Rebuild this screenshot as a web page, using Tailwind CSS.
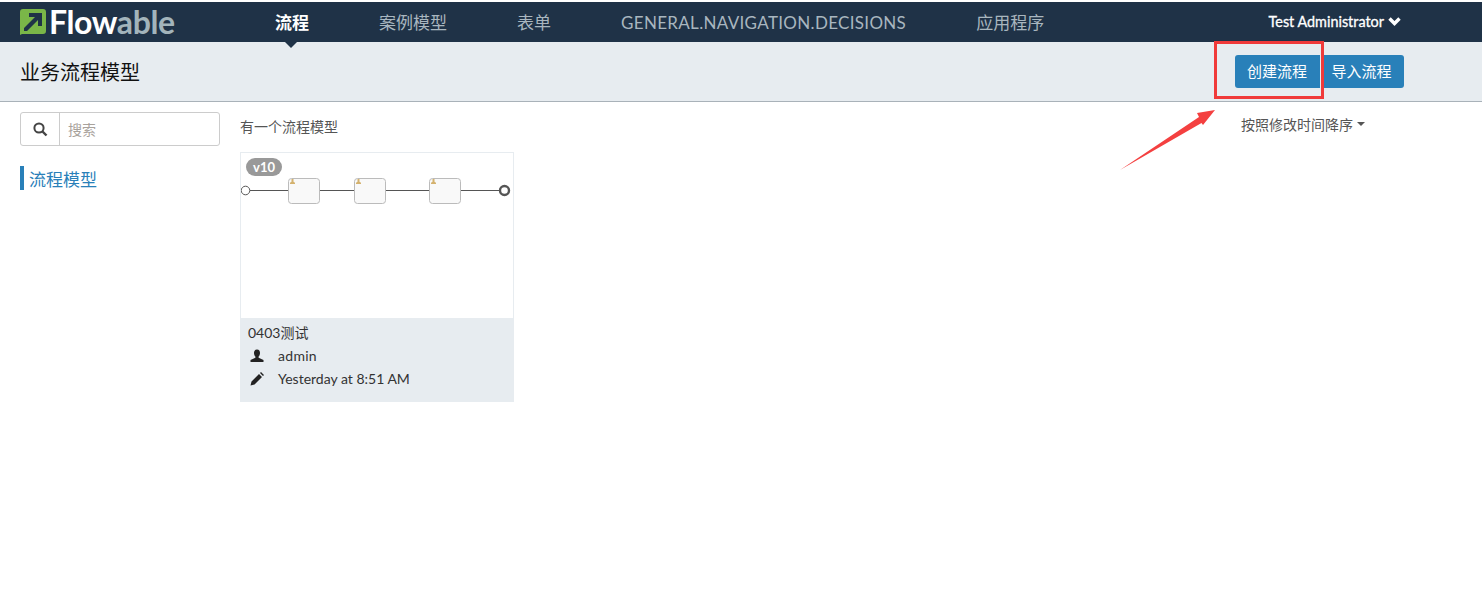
<!DOCTYPE html>
<html lang="en">
<head>
  <meta charset="UTF-8" />
  <title>Flowable</title>
  <script src="https://cdn.jsdelivr.net/npm/@tailwindcss/browser@4"></script>
</head>
<body class="bg-white text-[#1a1a1a] font-['Lato','Noto_Sans_CJK_SC',sans-serif] relative h-[594px] overflow-hidden">
  <!-- top nav -->
  <nav class="mt-[2px] h-[40px] bg-[#1f3247] flex items-center relative">
    <a class="ml-[20px] w-[155px] flex items-center shrink-0">
      <svg width="26" height="26" viewBox="0 0 26 26" class="shrink-0">
        <path d="M3 0H23Q26 0 26 3V22Q26 25 23 25H2L0 26V3Q0 0 3 0Z" fill="#7ab648"/>
        <path d="M9 4H22V17H18V11L7 22H4V19L15 8H9Z" fill="#1f3247"/>
      </svg>
      <span class="ml-[3px] text-[32px] leading-none font-bold tracking-[-0.4px] text-white">Flow<span class="text-[#a3b4bb]">able</span></span>
    </a>
    <ul class="flex items-center text-[17px] text-[#a9b6bf] ml-[100px] pt-[1px]">
      <li class="relative text-white font-bold w-[34px] text-center">流程
        <span class="absolute left-[10px] top-[32px] border-x-[6.500px] border-x-transparent border-t-[6px] border-t-[#1f3247]"></span>
      </li>
      <li class="ml-[70px]">案例模型</li>
      <li class="ml-[70px]">表单</li>
      <li class="ml-[70px] tracking-[0.32px]">GENERAL.NAVIGATION.DECISIONS</li>
      <li class="ml-[70px]">应用程序</li>
    </ul>
    <div class="ml-auto mr-[81px] flex items-center text-[14.400px] text-white [-webkit-text-stroke:0.3px_white]">
      Test Administrator
      <svg width="13" height="11" viewBox="0 0 13 11" class="ml-[4px] -mt-[2px]"><path d="M1.500 3.500 L6.500 8.500 L11.500 3.500" fill="none" stroke="#fff" stroke-width="3.400"/></svg>
    </div>
  </nav>

  <!-- sub header -->
  <header class="h-[60px] bg-[#e7ecf0] border-b border-[#a9b2b9] flex items-center justify-between pl-[20px] pr-[78px]">
    <h1 class="text-[20px] font-normal text-[#111] pt-[1px]">业务流程模型</h1>
    <div class="flex text-[15px] text-white -mt-[1px]">
      <button class="h-[33px] w-[85px] pr-[1px] bg-[#2980b9] rounded-l-[3px]">创建流程</button>
      <button class="h-[33px] w-[83px] pr-[2px] ml-px bg-[#2980b9] rounded-r-[3px]">导入流程</button>
    </div>
  </header>

  <div class="flex">
    <!-- sidebar -->
    <aside class="w-[240px] shrink-0 pl-[20px] pt-[10px]">
      <div class="w-[200px] h-[34px] flex border border-[#ccc] rounded-[3px]">
        <span class="w-[39px] flex items-center justify-center border-r border-[#ccc]">
          <svg width="15" height="15" viewBox="0 0 15 15"><circle cx="6" cy="6" r="4.600" fill="none" stroke="#444" stroke-width="2"/><path d="M9.500 9.500 13.500 13.500" stroke="#444" stroke-width="2.400"/></svg>
        </span>
        <span class="pl-[8px] text-[14px] leading-[34px] text-[#a8a29c]">搜索</span>
      </div>
      <div class="mt-[20px] h-[24px] border-l-4 border-[#2980b9] pl-[5px] text-[17px] leading-[28px] text-[#2980b9]">流程模型</div>
    </aside>

    <!-- main -->
    <main class="flex-1 pt-[15px]">
      <div class="flex justify-between pr-[117px]">
        <p class="text-[14px] leading-[20px] text-[#555]">有一个流程模型</p>
        <div class="-mt-[3px] flex items-center h-[20px] text-[14px] text-[#555]">按照修改时间降序
          <span class="ml-[4px] border-x-[4px] border-x-transparent border-t-[4px] border-t-[#555]"></span>
        </div>
      </div>
      <article class="relative mt-[15px] w-[274px] h-[250px]">
        <span class="absolute left-[6px] top-[6px] h-[18px] w-[36px] rounded-full bg-[#999] text-white text-[13px] leading-[18px] font-bold text-center">v10</span>
        <div class="h-[166px] border border-b-0 border-[#e7ecf0]">
          <svg width="272" height="70" viewBox="0 0 272 70" class="block">
            <path d="M9 37.500H47M79 37.500H113M145 37.500H188M220 37.500H258" stroke="#555" stroke-width="1"/>
            <circle cx="4.500" cy="37.500" r="4.300" fill="#fff" stroke="#555"/>
            <circle cx="263.500" cy="37.500" r="4.500" fill="#fff" stroke="#555" stroke-width="2.400"/>
            <g fill="#f9f9f9" stroke="#bbb"><rect x="47.500" y="25.500" width="31" height="25" rx="3"/><rect x="113.500" y="25.500" width="31" height="25" rx="3"/><rect x="188.500" y="25.500" width="31" height="25" rx="3"/></g>
            <g fill="#d4b26f"><path d="M49 31h5v-1.300l-1.500-1v-2.700h-2v2.700l-1.500 1z"/><path d="M115 31h5v-1.300l-1.500-1v-2.700h-2v2.700l-1.500 1z"/><path d="M190 31h5v-1.300l-1.500-1v-2.700h-2v2.700l-1.500 1z"/></g>
          </svg>
        </div>
        <div class="h-[84px] bg-[#e7ecf0] pl-[8px] pt-[3px] text-[14px] leading-[23px] text-[#333]">
          <div>0403测试</div>
          <div class="flex items-center">
            <svg width="14" height="14" viewBox="0 0 14 14" class="ml-[2px]"><path d="M7 0.500C9.200 0.500 10 2.200 10 4C10 5.600 9.400 6.800 8.600 7.600V8.800L13.500 11V13H0.500V11L5.400 8.800V7.600C4.600 6.800 4 5.600 4 4C4 2.200 4.800 .500 7 .500Z" fill="#222"/></svg>
            <span class="ml-[14px] tracking-[0.3px]">admin</span>
          </div>
          <div class="flex items-center">
            <svg width="14" height="14" viewBox="0 0 14 14" class="ml-[2px]"><path d="M0.500 13.500 1.500 9.500 9 2 12 5 4.500 12.500ZM10 1 11 0 14 3 13 4Z" fill="#222"/></svg>
            <span class="ml-[14px]">Yesterday at 8:51 AM</span>
          </div>
        </div>
      </article>
    </main>
  </div>

  <!-- red annotations drawn over the screenshot -->
  <div class="absolute left-[1214px] top-[41px] w-[110px] h-[58px] border-[3px] border-[#f03a3a]"></div>
  <svg class="absolute left-[1115px] top-[105px]" width="105" height="70" viewBox="0 0 105 70">
    <path d="M5 65 L84 12 L82 8 L100 5 L88 20 L86.500 18 Z" fill="#f44040"/>
  </svg>
</body>
</html>
